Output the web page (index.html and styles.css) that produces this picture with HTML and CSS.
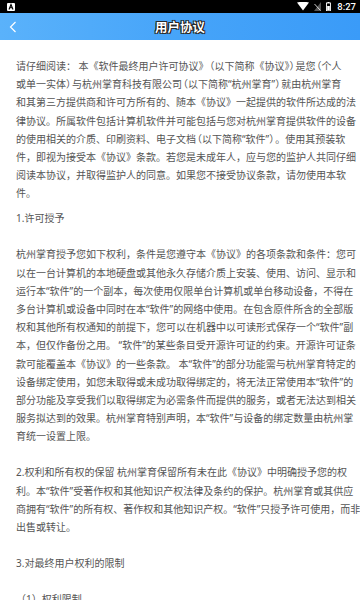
FILE: index.html
```html
<!DOCTYPE html>
<html lang="zh-CN">
<head>
<meta charset="utf-8">
<title>用户协议</title>
<link rel="stylesheet" href="styles.css">
</head>
<body>
<div class="statusbar">
  <svg class="sb-a" width="8" height="8" viewBox="0 0 8 8"><rect x="0" y="0" width="8" height="8" rx="1" fill="#fff"/><path d="M2 6.5 L4 1.5 L6 6.5 M2.8 4.8 H5.2" stroke="#000" stroke-width="1.1" fill="none"/></svg>
  <div class="sb-right">
    <svg width="12" height="9" viewBox="0 0 12 9"><path d="M0 0.5 Q6 -1 12 0.5 L6 8.5 Z" fill="#fff"/></svg>
    <svg width="7" height="9" viewBox="0 0 7 9"><path d="M0 9 L7 0 L7 9 Z" fill="#555"/><path d="M0.5 2 L6.5 8.5" stroke="#fff" stroke-width="0.8"/></svg>
    <svg width="5" height="9" viewBox="0 0 5 9"><rect x="1.5" y="0" width="2" height="1" fill="#fff"/><rect x="0.5" y="1" width="4" height="7.8" fill="none" stroke="#fff" stroke-width="0.9"/><rect x="1.2" y="4" width="2.6" height="4.2" fill="#fff"/></svg>
    <span class="sb-time">8:27</span>
  </div>
</div>
<header class="topbar">
  <svg class="back" width="8" height="12" viewBox="0 0 8 12"><path d="M6.5 1 L1.5 6 L6.5 11" stroke="#fff" stroke-width="1.2" fill="none"/></svg>
  <h1 class="title">用户协议</h1>
</header>
<main class="content">
  <p class="para p-first">请仔细阅读： 本《软件最终用户许可协议》<span class="po">（</span>以下简称《协议》<span class="pc">）</span>是您<span class="po">（</span>个人<br>或单一实体<span class="pc">）</span>与杭州掌育科技有限公司<span class="po">（</span>以下简称“杭州掌育”<span class="pc">）</span>就由杭州掌育<br>和其第三方提供商和许可方所有的、随本《协议》一起提供的软件所达成的法<br>律协议。所属软件包括计算机软件并可能包括与您对杭州掌育提供软件的设备<br>的使用相关的介质、印刷资料、电子文档<span class="po">（</span>以下简称“软件”<span class="pc">）</span>。使用其预装软<br>件，即视为接受本《协议》条款。若您是未成年人，应与您的监护人共同仔细<br>阅读本协议，并取得监护人的同意。如果您不接受协议条款，请勿使用本软<br>件。</p>
  <p class="para p-title1">1.许可授予</p>
  <p class="para gap">杭州掌育授予您如下权利，条件是您遵守本《协议》的各项条款和条件：您可<br>以在一台计算机的本地硬盘或其他永久存储介质上安装、使用、访问、显示和<br>运行本“软件”的一个副本，每次使用仅限单台计算机或单台移动设备，不得在<br>多台计算机或设备中同时在本“软件”的网络中使用。在包含原件所含的全部版<br>权和其他所有权通知的前提下，您可以在机器中以可读形式保存一个“软件”副<br>本，但仅作备份之用。 “软件”的某些条目受开源许可证的约束。开源许可证条<br>款可能覆盖本《协议》的一些条款。 本“软件”的部分功能需与杭州掌育特定的<br>设备绑定使用，如您未取得或未成功取得绑定的，将无法正常使用本“软件”的<br>部分功能及享受我们以取得绑定为必需条件而提供的服务，或者无法达到相关<br>服务拟达到的效果。杭州掌育特别声明，本“软件”与设备的绑定数量由杭州掌<br>育统一设置上限。</p>
  <p class="para gap">2.权利和所有权的保留 杭州掌育保留所有未在此《协议》中明确授予您的权<br>利。本“软件”受著作权和其他知识产权法律及条约的保护。杭州掌育或其供应<br>商拥有“软件”的所有权、著作权和其他知识产权。“软件”只授予许可使用，而非<br>出售或转让。</p>
  <p class="para gap">3.对最终用户权利的限制</p>
  <p class="para gap">（1）权利限制</p>
</main>
</body>
</html>
```
FILE: styles.css
```css
html, body {
  margin: 0;
  padding: 0;
  background: #fff;
}
body {
  width: 360px;
  height: 600px;
  overflow: hidden;
  font-family: "Noto Sans", "Noto Sans CJK SC", sans-serif;
}
.statusbar {
  height: 13px;
  background: #000;
  display: flex;
  align-items: center;
  justify-content: space-between;
  padding: 0 4px 0 7px;
}
.sb-a { display: block; }
.sb-right {
  display: flex;
  align-items: center;
  gap: 5px;
}
.sb-right svg { display: block; }
.sb-time {
  color: #fff;
  font-family: "Roboto", sans-serif;
  font-size: 9.5px;
  font-weight: 500;
  margin-left: 1px;
}
.topbar {
  height: 27px;
  background: linear-gradient(90deg, #5ab2fb 0%, #46a4f9 50%, #3a9bf8 100%);
  display: flex;
  align-items: center;
  justify-content: center;
  position: relative;
}
.back {
  position: absolute;
  left: 9px;
  top: 8px;
}
.title {
  margin: 0;
  font-size: 12.5px;
  font-weight: 700;
  color: #fff;
  font-family: "Noto Sans CJK SC", sans-serif;
  text-shadow: 0 0 1px #000, 0 0 1px #000, 1px 1px 0 #333, -1px -1px 0 #333, 1px -1px 0 #333, -1px 1px 0 #333;
}
.content {
  padding: 17px 0 0 16px;
}
.para {
  margin: 0;
  font-size: 10px;
  line-height: 18.2px;
  color: #555;
  white-space: nowrap;
}
.po, .pc {
  font-feature-settings: "halt";
}
.po { margin-left: 1px; }
.pc { margin-right: 1px; }
.p-title1 { margin-top: 6.7px; }
.gap { margin-top: 17.8px; }
```
